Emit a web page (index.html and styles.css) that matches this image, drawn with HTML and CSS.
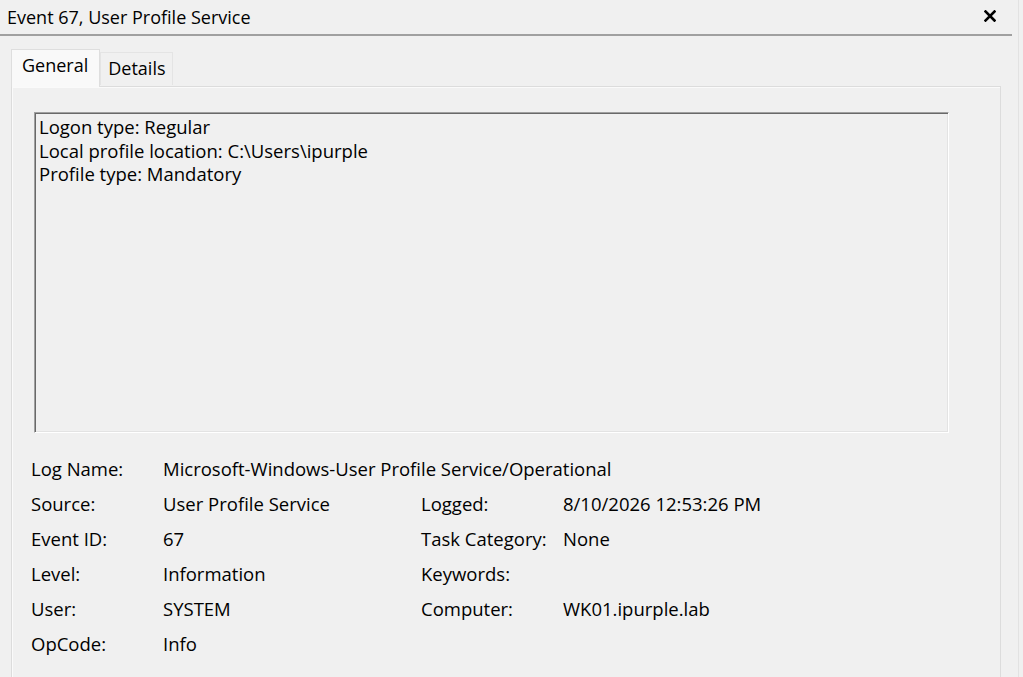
FILE: index.html
```html
<!DOCTYPE html>
<html>
<head>
<meta charset="utf-8">
<link rel="stylesheet" href="styles.css">
</head>
<body>
<div class="window">
  <div class="titlebar">
    <span class="title">Event 67, User Profile Service</span>
    <span class="close"><svg width="12" height="12" viewBox="0 0 12 12"><path d="M1.5 1.5 L10.5 10.5 M10.5 1.5 L1.5 10.5" stroke="#000" stroke-width="2.6" stroke-linecap="square"/></svg></span>
  </div>
  <div class="divider"></div>
  <div class="content">
    <div class="tabs">
      <div class="tab active">General</div>
      <div class="tab">Details</div>
    </div>
    <div class="panel">
      <div class="textbox">
        <div>Logon type: Regular</div>
        <div>Local profile location: C:\Users\ipurple</div>
        <div>Profile type: Mandatory</div>
      </div>
      <div class="props">
        <div class="lbl">Log Name:</div><div class="val span3">Microsoft-Windows-User Profile Service/Operational</div>
        <div class="lbl">Source:</div><div class="val">User Profile Service</div><div class="lbl">Logged:</div><div class="val">8/10/2026 12:53:26 PM</div>
        <div class="lbl">Event ID:</div><div class="val">67</div><div class="lbl">Task Category:</div><div class="val">None</div>
        <div class="lbl">Level:</div><div class="val">Information</div><div class="lbl">Keywords:</div><div class="val"></div>
        <div class="lbl">User:</div><div class="val">SYSTEM</div><div class="lbl">Computer:</div><div class="val">WK01.ipurple.lab</div>
        <div class="lbl">OpCode:</div><div class="val">Info</div><div class="lbl"></div><div class="val"></div>
      </div>
    </div>
  </div>
</div>
</body>
</html>
```
FILE: styles.css
```css
html, body {
  margin: 0;
  padding: 0;
  background: #f0f0f0;
  overflow: hidden;
}
body {
  font-family: "Open Sans", "Noto Sans", sans-serif;
  font-size: 18.5px;
  color: #000;
  height: 677px;
}
.window {
  width: 1019px;
  height: 677px;
  border-right: 1px solid #e2e2e2;
  box-sizing: border-box;
  overflow: hidden;
}
.titlebar {
  height: 34px;
  display: flex;
  align-items: center;
  justify-content: space-between;
  padding: 0 16px 0 7px;
  width: 1012px;
  box-sizing: border-box;
}
.title {
  font-size: 18px;
  line-height: 22px;
}
.close {
  display: flex;
  width: 12px;
  height: 12px;
  margin-top: -3px;
}
.divider {
  width: 1012px;
  height: 2px;
  background: #a0a0a0;
}
.content {
  padding: 11px 0 0 11px;
  width: 990px;
}
.tabs {
  display: flex;
  align-items: flex-end;
  height: 39px;
  font-size: 18px;
}
.tab {
  box-sizing: border-box;
  height: 33px;
  padding: 0 6px 0 7px;
  line-height: 30px;
  border: 1px solid #e4e4e4;
  border-bottom: none;
  background: #f0f0f0;
  margin-bottom: 1px;
}
.tab.active {
  height: 38px;
  padding: 0 11px 0 10px;
  line-height: 30px;
  background: #f9f9f9;
  border-color: #dedede;
  margin-bottom: -1px;
  position: relative;
  z-index: 1;
}
.panel {
  border: 1px solid #dcdcdc;
  border-bottom: none;
  box-shadow: inset 1px 1px 0 #fafafa;
  height: 591px;
  padding: 25px 0 0 22px;
  box-sizing: border-box;
}
.textbox {
  width: 915px;
  height: 321px;
  box-sizing: border-box;
  border-top: 1px solid #a0a0a0;
  border-left: 1px solid #a0a0a0;
  border-right: 1px solid #ffffff;
  border-bottom: 1px solid #ffffff;
  box-shadow: inset 1px 1px 0 #696969, inset -1px -1px 0 #e3e3e3;
  padding: 2px 4px;
  line-height: 23.5px;
}
.props {
  display: grid;
  grid-template-columns: 132px 258px 142px auto;
  grid-auto-rows: 35px;
  align-items: center;
  margin: 18px 0 0 -3px;
}
.span3 {
  grid-column: span 3;
}
```
